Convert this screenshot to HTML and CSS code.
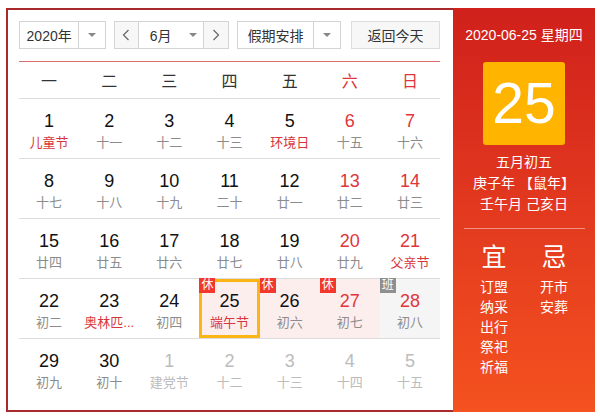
FILE: index.html
```html
<!DOCTYPE html>
<html lang="zh-CN">
<head>
<meta charset="utf-8">
<title>万年历</title>
<link rel="stylesheet" href="styles.css">
</head>
<body>
<div class="cal">
  <div class="main">
    <div class="controls">
      <div class="sel sel-year">
        <span class="sel-text">2020年</span>
        <span class="sel-arrow"><i class="tri"></i></span>
      </div>
      <div class="sel sel-month">
        <span class="nav"><svg width="8" height="12" viewBox="0 0 8 12"><polyline points="6.5,1 1.5,6 6.5,11" fill="none" stroke="#666" stroke-width="1.2"/></svg></span>
        <span class="sel-text month-text">6月</span>
        <span class="month-arrow"><i class="tri"></i></span>
        <span class="nav nav-next"><svg width="8" height="12" viewBox="0 0 8 12"><polyline points="1.5,1 6.5,6 1.5,11" fill="none" stroke="#666" stroke-width="1.2"/></svg></span>
      </div>
      <div class="sel sel-holiday">
        <span class="sel-text">假期安排</span>
        <span class="sel-arrow"><i class="tri"></i></span>
      </div>
      <div class="btn-today">返回今天</div>
    </div>

    <div class="week">
      <span>一</span><span>二</span><span>三</span><span>四</span><span>五</span><span class="we">六</span><span class="we">日</span>
    </div>

    <div class="row">
      <div class="cell"><div class="num">1</div><div class="lunar fest">儿童节</div></div>
      <div class="cell"><div class="num">2</div><div class="lunar">十一</div></div>
      <div class="cell"><div class="num">3</div><div class="lunar">十二</div></div>
      <div class="cell"><div class="num">4</div><div class="lunar">十三</div></div>
      <div class="cell"><div class="num">5</div><div class="lunar fest">环境日</div></div>
      <div class="cell wkend"><div class="num">6</div><div class="lunar">十五</div></div>
      <div class="cell wkend"><div class="num">7</div><div class="lunar">十六</div></div>
    </div>
    <div class="row">
      <div class="cell"><div class="num">8</div><div class="lunar">十七</div></div>
      <div class="cell"><div class="num">9</div><div class="lunar">十八</div></div>
      <div class="cell"><div class="num">10</div><div class="lunar">十九</div></div>
      <div class="cell"><div class="num">11</div><div class="lunar">二十</div></div>
      <div class="cell"><div class="num">12</div><div class="lunar">廿一</div></div>
      <div class="cell wkend"><div class="num">13</div><div class="lunar">廿二</div></div>
      <div class="cell wkend"><div class="num">14</div><div class="lunar">廿三</div></div>
    </div>
    <div class="row">
      <div class="cell"><div class="num">15</div><div class="lunar">廿四</div></div>
      <div class="cell"><div class="num">16</div><div class="lunar">廿五</div></div>
      <div class="cell"><div class="num">17</div><div class="lunar">廿六</div></div>
      <div class="cell"><div class="num">18</div><div class="lunar">廿七</div></div>
      <div class="cell"><div class="num">19</div><div class="lunar">廿八</div></div>
      <div class="cell wkend"><div class="num">20</div><div class="lunar">廿九</div></div>
      <div class="cell wkend"><div class="num">21</div><div class="lunar fest">父亲节</div></div>
    </div>
    <div class="row">
      <div class="cell"><div class="num">22</div><div class="lunar">初二</div></div>
      <div class="cell"><div class="num">23</div><div class="lunar fest">奥林匹...</div></div>
      <div class="cell"><div class="num">24</div><div class="lunar">初四</div></div>
      <div class="cell rest selected"><span class="badge">休</span><div class="num">25</div><div class="lunar fest">端午节</div></div>
      <div class="cell rest"><span class="badge">休</span><div class="num">26</div><div class="lunar">初六</div></div>
      <div class="cell rest wkend"><span class="badge">休</span><div class="num">27</div><div class="lunar">初七</div></div>
      <div class="cell work wkend"><span class="badge badge-work">班</span><div class="num">28</div><div class="lunar">初八</div></div>
    </div>
    <div class="row row-last">
      <div class="cell"><div class="num">29</div><div class="lunar">初九</div></div>
      <div class="cell"><div class="num">30</div><div class="lunar">初十</div></div>
      <div class="cell other"><div class="num">1</div><div class="lunar">建党节</div></div>
      <div class="cell other"><div class="num">2</div><div class="lunar">十二</div></div>
      <div class="cell other"><div class="num">3</div><div class="lunar">十三</div></div>
      <div class="cell other"><div class="num">4</div><div class="lunar">十四</div></div>
      <div class="cell other"><div class="num">5</div><div class="lunar">十五</div></div>
    </div>
  </div>

  <div class="side">
    <div class="side-date">2020-06-25 星期四</div>
    <div class="big-day">25</div>
    <div class="lunar-info">
      <div>五月初五</div>
      <div>庚子年 【鼠年】</div>
      <div>壬午月 己亥日</div>
    </div>
    <div class="side-line"></div>
    <div class="yiji">
      <div class="yiji-col">
        <div class="yiji-title">宜</div>
        <div class="yiji-item">订盟</div>
        <div class="yiji-item">纳采</div>
        <div class="yiji-item">出行</div>
        <div class="yiji-item">祭祀</div>
        <div class="yiji-item">祈福</div>
      </div>
      <div class="yiji-col">
        <div class="yiji-title">忌</div>
        <div class="yiji-item">开市</div>
        <div class="yiji-item">安葬</div>
      </div>
    </div>
  </div>
</div>
</body>
</html>
```

FILE: styles.css
```css
body {
  margin: 0;
  background: #fff;
  font-family: "Liberation Sans", "Noto Sans CJK SC", sans-serif;
  color: #333;
}

.cal {
  display: flex;
  margin: 8px 0 0 6px;
  width: 589px;
  height: 404px;
}

.main {
  box-sizing: border-box;
  width: 447px;
  height: 404px;
  border: 2px solid #a8282b;
  border-right: none;
  padding: 11px 13px 0 11px;
  background: #fff;
}

/* controls */
.controls {
  display: flex;
  height: 28px;
  font-size: 14px;
}

.sel {
  box-sizing: border-box;
  display: flex;
  height: 28px;
  border: 1px solid #d4d4d4;
  background: #fff;
}

.sel-text {
  display: flex;
  align-items: center;
  justify-content: center;
  color: #333;
}

.sel-arrow {
  display: flex;
  align-items: center;
  justify-content: center;
  border-left: 1px solid #d4d4d4;
  width: 26px;
}

.tri {
  display: block;
  width: 0;
  height: 0;
  border-left: 4px solid transparent;
  border-right: 4px solid transparent;
  border-top: 4px solid #888;
}

.sel-year {
  width: 87px;
}

.sel-year .sel-text {
  width: 59px;
}

.sel-month {
  width: 115px;
  margin-left: 8px;
}

.nav {
  display: flex;
  align-items: center;
  justify-content: center;
  width: 23px;
  background: #f7f7f7;
  border-right: 1px solid #d4d4d4;
}

.nav-next {
  border-right: none;
  border-left: 1px solid #d4d4d4;
  width: 24px;
}

.month-text {
  width: 44px;
}

.month-arrow {
  display: flex;
  align-items: center;
  justify-content: center;
  width: 21px;
}

.sel-holiday {
  width: 104px;
  margin-left: 8px;
}

.sel-holiday .sel-text {
  width: 76px;
}

.btn-today {
  box-sizing: border-box;
  width: 89px;
  height: 28px;
  margin-left: 10px;
  border: 1px solid #dcdcdc;
  background: #f7f7f7;
  display: flex;
  align-items: center;
  justify-content: center;
  color: #333;
}

/* week header */
.week {
  box-sizing: border-box;
  display: grid;
  grid-template-columns: repeat(7, 1fr);
  height: 38px;
  margin-top: 12px;
  border-top: 1px solid #e07070;
  border-bottom: 1px solid #dcdcdc;
  align-items: center;
  text-align: center;
  font-size: 16px;
  color: #333;
}

.week .we {
  color: #e0353a;
}

/* rows */
.row {
  box-sizing: border-box;
  display: grid;
  grid-template-columns: repeat(7, 1fr);
  height: 60px;
  border-bottom: 1px solid #dcdcdc;
}

.row-last {
  border-bottom: none;
}

.cell {
  position: relative;
  box-sizing: border-box;
  text-align: center;
  padding-top: 12px;
}

.num {
  font-size: 18px;
  line-height: 20px;
  color: #111;
}

.lunar {
  margin-top: 3px;
  font-size: 13px;
  line-height: 18px;
  color: #8c8c8c;
  white-space: nowrap;
}

.lunar.fest {
  color: #d8363b;
}

.wkend .num {
  color: #e0353a;
}

.other .num,
.other .lunar {
  color: #bcbcbc;
}

.rest {
  background: #fdeeee;
}

.work {
  background: #f5f5f5;
}

.selected {
  border: 3px solid #fcb515;
  padding-top: 9px;
}

.badge {
  position: absolute;
  top: -1px;
  left: 0;
  width: 16px;
  height: 15px;
  background: #f2382c;
  color: #fff;
  font-size: 12px;
  line-height: 15px;
  text-align: center;
}

.selected .badge {
  top: -4px;
  left: -3px;
}

.badge-work {
  background: #8f8f8f;
}

/* side panel */
.side {
  width: 142px;
  height: 404px;
  background: linear-gradient(180deg, #d0201b 0%, #e2391f 50%, #f4521f 100%);
  color: #fff;
  text-align: center;
  display: flex;
  flex-direction: column;
  align-items: center;
}

.side-date {
  margin-top: 17px;
  font-size: 14px;
  line-height: 20px;
}

.big-day {
  margin-top: 17px;
  width: 82px;
  height: 83px;
  border-radius: 3px;
  background: #ffb500;
  font-size: 57px;
  line-height: 83px;
  color: #fff;
}

.lunar-info {
  margin-top: 7px;
  font-size: 14px;
  line-height: 21px;
}

.side-line {
  margin-top: 13px;
  width: 121px;
  height: 1px;
  background: rgba(255, 255, 255, 0.45);
}

.yiji {
  display: flex;
  margin-top: 13px;
}

.yiji-col {
  width: 60px;
  display: flex;
  flex-direction: column;
  align-items: center;
}

.yiji-title {
  font-size: 25px;
  line-height: 30px;
  margin-bottom: 5px;
}

.yiji-item {
  font-size: 14px;
  line-height: 20px;
}
```
